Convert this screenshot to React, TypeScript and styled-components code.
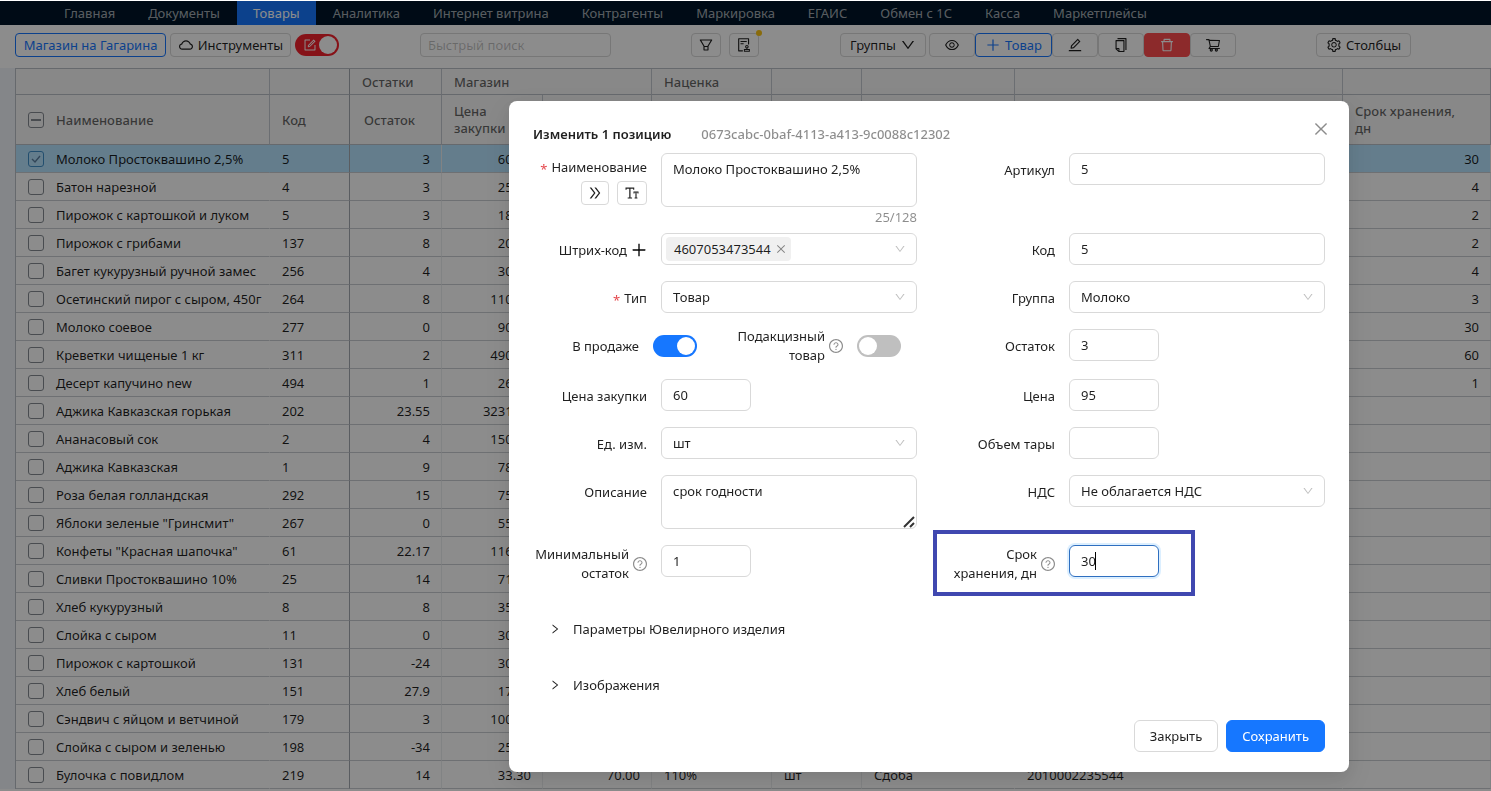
import React from 'react';
import styled, { createGlobalStyle, css } from 'styled-components';
import {
  AiOutlineAudit,
  AiOutlineClose,
  AiOutlineCloud,
  AiOutlineCopy,
  AiOutlineDelete,
  AiOutlineDoubleRight,
  AiOutlineDown,
  AiOutlineEdit,
  AiOutlineEye,
  AiOutlineFilter,
  AiOutlineFontSize,
  AiOutlineForm,
  AiOutlinePlus,
  AiOutlineQuestionCircle,
  AiOutlineRight,
  AiOutlineSetting,
  AiOutlineShoppingCart,
} from 'react-icons/ai';

const GlobalStyle = createGlobalStyle`
  * { box-sizing: border-box; }
  body {
    margin: 0;
    background: #fff;
    color: rgba(0, 0, 0, 0.88);
    font: 13px/22px "Noto Sans", "Open Sans", sans-serif;
  }
  button, input, textarea, select { font: inherit; color: inherit; margin: 0; }
  button { cursor: pointer; }
  svg { display: block; flex: none; }
`;

const Page = styled.div`
  height: 100vh;
  overflow: hidden;
  border-top: 1px solid #fff;
`;

/* ---------- top navigation ---------- */

const Nav = styled.nav`
  display: flex;
  gap: 1px;
  height: 24px;
  padding-left: 48px;
  background: #001529;
`;

const NavLink = styled.a<{ $active?: boolean }>`
  padding: 0 16px;
  line-height: 24px;
  white-space: nowrap;
  text-decoration: none;
  color: ${(p) => (p.$active ? '#fff' : 'rgba(255, 255, 255, 0.65)')};
  background: ${(p) => (p.$active ? '#1677ff' : 'transparent')};
`;

/* ---------- toolbar ---------- */

const Toolbar = styled.div`
  display: flex;
  align-items: center;
  height: 43px;
  padding: 0 15px 4px;
`;

const Group = styled.div<{ $gap?: number; $before?: number }>`
  display: flex;
  flex: none;
  align-items: center;
  gap: ${(p) => p.$gap ?? 0}px;
  margin-left: ${(p) => p.$before ?? 0}px;
`;

const ToolButton = styled.button<{ $tone?: 'primary' | 'danger'; $width?: number }>`
  display: flex;
  flex: none;
  align-items: center;
  justify-content: center;
  gap: 4px;
  height: 24px;
  width: ${(p) => (p.$width ? `${p.$width}px` : 'auto')};
  padding: 0 6px;
  border: 1px solid #d9d9d9;
  border-radius: 4px;
  background: #fff;
  line-height: 22px;
  white-space: nowrap;
  ${(p) =>
    p.$tone === 'primary' &&
    css`
      border-color: #1677ff;
      color: #1677ff;
    `}
  ${(p) =>
    p.$tone === 'danger' &&
    css`
      border-color: #ff4d4f;
      background: #ff4d4f;
      color: #fff;
    `}
`;

const Badged = styled.div`
  position: relative;
`;

const Dot = styled.span`
  position: absolute;
  top: -3px;
  right: -3px;
  width: 6px;
  height: 6px;
  border-radius: 50%;
  background: #fac414;
`;

const Search = styled.input`
  width: 191px;
  height: 24px;
  margin-left: 81px;
  padding: 0 7px;
  border: 1px solid #d9d9d9;
  border-radius: 4px;
  background: #fff;
  &::placeholder { color: rgba(0, 0, 0, 0.25); opacity: 1; }
`;

/* ---------- switch ---------- */

const SwitchBox = styled.label<{ $on: boolean; $color?: string }>`
  position: relative;
  display: flex;
  flex: none;
  align-items: center;
  width: 44px;
  height: 22px;
  padding: 0 8px;
  border-radius: 11px;
  color: #fff;
  background: ${(p) => (p.$on ? p.$color ?? '#1677ff' : '#bfbfbf')};
  &::after {
    content: '';
    position: absolute;
    top: 2px;
    left: ${(p) => (p.$on ? 24 : 2)}px;
    width: 18px;
    height: 18px;
    border-radius: 50%;
    background: #fff;
  }
  input {
    position: absolute;
    inset: 0;
    margin: 0;
    opacity: 0;
  }
`;

function Switch(props: { on: boolean; id: string; label: string; color?: string; children?: React.ReactNode }) {
  return (
    <SwitchBox $on={props.on} $color={props.color}>
      <input type="checkbox" role="switch" id={props.id} aria-label={props.label} defaultChecked={props.on} />
      {props.children}
    </SwitchBox>
  );
}

/* ---------- goods table ---------- */

const Sheet = styled.div`
  padding-left: 15px;
  background: #f0f5fa;
`;

const Table = styled.table`
  width: 100%;
  table-layout: fixed;
  border-collapse: separate;
  border-spacing: 0;
  border-left: 1px solid #babfc7;
  border-top: 1px solid #babfc7;
  background: #fff;
`;

const HeadCell = styled.th<{ $strong?: boolean; $indent?: number }>`
  padding: 1px 20px 0 ${(p) => p.$indent ?? 12}px;
  border-right: 1px solid ${(p) => (p.$strong ? '#a4a9b1' : '#c4c9d0')};
  border-bottom: 1px solid #babfc7;
  background: #f8f8f8;
  color: rgba(0, 0, 0, 0.6);
  font-weight: 500;
  line-height: 17px;
  text-align: left;
`;

const HeadRow = styled.tr<{ $height: number }>`
  height: ${(p) => p.$height}px;
`;

const Row = styled.tr<{ $selected?: boolean }>`
  height: 28px;
  background: ${(p) => (p.$selected ? '#b7e4ff' : '#fff')};
`;

const Cell = styled.td<{ $num?: boolean; $edge?: 'strong' | 'soft' }>`
  padding: 0 11px 0 12px;
  overflow: hidden;
  border-bottom: 1px solid #c9cdd1;
  border-right: 1px solid
    ${(p) => (p.$edge === 'strong' ? '#a4a9b1' : p.$edge === 'soft' ? '#eceef0' : 'transparent')};
  line-height: 26px;
  white-space: nowrap;
  text-align: ${(p) => (p.$num ? 'right' : 'left')};
`;

const NameLine = styled.label`
  display: flex;
  align-items: center;
  gap: 12px;
`;

const Check = styled.input`
  appearance: none;
  flex: none;
  width: 16px;
  height: 16px;
  border: 1px solid #858b92;
  border-radius: 3px;
  background: transparent;
  &:checked {
    border-color: #3f8fc9;
    background: no-repeat center / 12px 12px
      url("data:image/svg+xml,%3Csvg xmlns='http://www.w3.org/2000/svg' viewBox='0 0 12 12'%3E%3Cpath d='M2 6l3 3 5-6' fill='none' stroke='%235b7fa0' stroke-width='1.4'/%3E%3C/svg%3E");
  }
  &[data-mixed='true'] {
    background: linear-gradient(#858b92, #858b92) no-repeat center / 10px 2px;
  }
`;

type Item = [name: string, code: string, rest: string, buy: string, life: string];

const items: Item[] = [
  ['Молоко Простоквашино 2,5%', '5', '3', '60.00', '30'],
  ['Батон нарезной', '4', '3', '25.00', '4'],
  ['Пирожок с картошкой и луком', '5', '3', '18.00', '2'],
  ['Пирожок с грибами', '137', '8', '20.00', '2'],
  ['Багет кукурузный ручной замес', '256', '4', '30.00', '4'],
  ['Осетинский пирог с сыром, 450г', '264', '8', '110.00', '3'],
  ['Молоко соевое', '277', '0', '90.00', '30'],
  ['Креветки чищеные 1 кг', '311', '2', '490.00', '60'],
  ['Десерт капучино new', '494', '1', '26.00', '1'],
  ['Аджика Кавказская горькая', '202', '23.55', '3231.00', ''],
  ['Ананасовый сок', '2', '4', '150.00', ''],
  ['Аджика Кавказская', '1', '9', '78.00', ''],
  ['Роза белая голландская', '292', '15', '75.00', ''],
  ['Яблоки зеленые "Гринсмит"', '267', '0', '55.00', ''],
  ['Конфеты "Красная шапочка"', '61', '22.17', '116.00', ''],
  ['Сливки Простоквашино 10%', '25', '14', '71.00', ''],
  ['Хлеб кукурузный', '8', '8', '35.00', ''],
  ['Слойка с сыром', '11', '0', '30.00', ''],
  ['Пирожок с картошкой', '131', '-24', '30.00', ''],
  ['Хлеб белый', '151', '27.9', '17.00', ''],
  ['Сэндвич с яйцом и ветчиной', '179', '3', '100.00', ''],
  ['Слойка с сыром и зеленью', '198', '-34', '25.00', ''],
  ['Булочка с повидлом', '219', '14', '33.30', ''],
];

const columns = [254, 80, 92, 101, 109, 120, 90, 153, 0, 148];

function GoodsTable() {
  return (
    <Sheet>
      <Table>
        <colgroup>
          {columns.map((width, i) => (
            <col key={i} style={width ? { width } : undefined} />
          ))}
        </colgroup>
        <thead>
          <HeadRow $height={26}>
            <HeadCell />
            <HeadCell $strong />
            <HeadCell>Остатки</HeadCell>
            <HeadCell colSpan={2}>Магазин</HeadCell>
            <HeadCell>Наценка</HeadCell>
            <HeadCell />
            <HeadCell />
            <HeadCell />
            <HeadCell />
          </HeadRow>
          <HeadRow $height={50}>
            <HeadCell>
              <NameLine>
                <Check type="checkbox" data-mixed="true" />
                Наименование
              </NameLine>
            </HeadCell>
            <HeadCell $strong>Код</HeadCell>
            <HeadCell $indent={14}>Остаток</HeadCell>
            <HeadCell>Цена закупки</HeadCell>
            <HeadCell />
            <HeadCell />
            <HeadCell />
            <HeadCell />
            <HeadCell />
            <HeadCell>Срок хранения, дн</HeadCell>
          </HeadRow>
        </thead>
        <tbody>
          {items.map(([name, code, rest, buy, life], i) => {
            const last = i === items.length - 1;
            return (
              <Row key={name} $selected={i === 0}>
                <Cell>
                  <NameLine>
                    <Check type="checkbox" defaultChecked={i === 0} />
                    {name}
                  </NameLine>
                </Cell>
                <Cell $edge="strong">{code}</Cell>
                <Cell $num $edge="soft">{rest}</Cell>
                <Cell $num $edge="soft">{buy}</Cell>
                <Cell $num $edge="soft">{last ? '70.00' : ''}</Cell>
                <Cell $edge="soft">{last ? '110%' : ''}</Cell>
                <Cell $edge="soft">{last ? 'шт' : ''}</Cell>
                <Cell>{last ? 'Сдоба' : ''}</Cell>
                <Cell>{last ? '2010002235544' : ''}</Cell>
                <Cell $num $edge="soft">{life}</Cell>
              </Row>
            );
          })}
        </tbody>
      </Table>
    </Sheet>
  );
}

/* ---------- edit dialog ---------- */

const Mask = styled.div`
  position: fixed;
  inset: 1px 0 0 0;
  display: flex;
  align-items: flex-start;
  justify-content: flex-end;
  padding: 100px 142px 0 0;
  background: rgba(0, 0, 0, 0.45);
`;

const Dialog = styled.section`
  width: 840px;
  padding: 20px 24px;
  border-radius: 8px;
  background: #fff;
  box-shadow: 0 6px 16px rgba(0, 0, 0, 0.08), 0 9px 28px 8px rgba(0, 0, 0, 0.05);
`;

const DialogHead = styled.header`
  display: flex;
  align-items: center;
  height: 26px;
  margin-bottom: 6px;
`;

const Title = styled.h1`
  margin: 0 30px 0 0;
  font-size: 13px;
  font-weight: 600;
`;

const Ident = styled.span`
  flex: 1;
  color: rgba(0, 0, 0, 0.45);
  font-weight: 500;
`;

const CloseButton = styled.button`
  display: flex;
  align-items: center;
  align-self: flex-start;
  justify-content: center;
  width: 22px;
  height: 22px;
  margin: -3px -7px 0 0;
  padding: 0;
  border: 0;
  background: none;
  color: rgba(0, 0, 0, 0.45);
  font-size: 18px;
`;

const FormRow = styled.div<{ $after?: number }>`
  display: grid;
  grid-template-columns: 1fr 1fr;
  gap: 24px;
  align-items: start;
  margin-bottom: ${(p) => p.$after ?? 16}px;
`;

const Field = styled.div`
  position: relative;
  display: flex;
  align-items: flex-start;
`;

const LabelBox = styled.div<{ $width?: number }>`
  display: flex;
  flex: none;
  align-items: center;
  justify-content: flex-end;
  gap: 3px;
  width: ${(p) => p.$width ?? 115}px;
  min-height: 34px;
  margin-right: 13px;
  padding-right: 1px;
  line-height: 19px;
  text-align: right;
  svg { font-size: 16px; margin-right: -1px; color: rgba(0, 0, 0, 0.45); }
`;

const NameLabel = styled.div`
  width: 114px;
  margin-right: 14px;
  line-height: 28px;
  text-align: right;
  white-space: nowrap;
`;

const Star = styled.span`
  margin-right: 4px;
  color: #e5484d;
  line-height: 1;
  vertical-align: -2px;
`;

const SmallButtons = styled.div`
  display: flex;
  justify-content: flex-end;
  gap: 8px;
`;

const SmallButton = styled(ToolButton)`
  font-size: 16px;
  padding: 0;
`;

const AddButton = styled.button`
  display: flex;
  padding: 0;
  border: 0;
  background: none;
  svg { font-size: 18px; color: #000; }
`;

const Control = styled.div`
  position: relative;
  flex: 1;
  min-width: 0;
`;

const boxStyle = css`
  display: block;
  width: 100%;
  height: 32px;
  padding: 0 11px;
  border: 1px solid #d9d9d9;
  border-radius: 6px;
  outline: 0;
  background: #fff;
`;

const Input = styled.input<{ $short?: boolean; $focused?: boolean }>`
  ${boxStyle}
  width: ${(p) => (p.$short ? '90px' : '100%')};
  ${(p) =>
    p.$focused &&
    css`
      border-color: #2f6fc0;
      box-shadow: 0 0 0 2px rgba(5, 145, 255, 0.14);
    `}
`;

const Area = styled.textarea`
  ${boxStyle}
  height: 54px;
  padding: 4px 11px;
  resize: none;
`;

const Grip = styled.svg`
  position: absolute;
  right: 2px;
  bottom: 1px;
  width: 12px;
  height: 12px;
  stroke: #333;
  stroke-width: 2;
  pointer-events: none;
`;

const Select = styled.select`
  ${boxStyle}
  appearance: none;
`;

const Arrow = styled(AiOutlineDown)`
  position: absolute;
  top: 10px;
  right: 11px;
  font-size: 12px;
  color: rgba(0, 0, 0, 0.25);
  pointer-events: none;
`;

const Count = styled.div`
  height: 26px;
  line-height: 20px;
  text-align: right;
  color: rgba(0, 0, 0, 0.45);
`;

const TagSelect = styled.div`
  ${boxStyle}
  padding: 3px 4px;
`;

const Tag = styled.span`
  display: inline-flex;
  align-items: center;
  gap: 4px;
  height: 24px;
  padding: 0 4px 0 8px;
  border-radius: 4px;
  background: #f0f0f0;
`;

const TagClose = styled.button`
  display: flex;
  padding: 0;
  border: 0;
  background: none;
  font-size: 12px;
  color: rgba(0, 0, 0, 0.45);
`;

const Switches = styled.div`
  display: grid;
  grid-template: 34px / 1fr 1fr;
  align-items: center;
`;

const SwitchField = styled.div`
  display: flex;
  align-items: center;
`;

const Caret = styled.span`
  position: absolute;
  top: 7px;
  left: 26px;
  width: 1px;
  height: 18px;
  background: #000;
`;

const Marker = styled.div`
  position: absolute;
  inset: -15px 130px auto -8px;
  height: 66px;
  border: 4px solid #4048b0;
  pointer-events: none;
`;

const Section = styled.button`
  display: flex;
  align-items: center;
  gap: 12px;
  width: 100%;
  height: 56px;
  padding: 0 16px;
  border: 0;
  background: none;
  text-align: left;
  svg { font-size: 12px; }
`;

const Footer = styled.footer`
  display: flex;
  justify-content: flex-end;
  gap: 8px;
  margin-top: 7px;
`;

const FooterButton = styled.button<{ $primary?: boolean }>`
  height: 32px;
  padding: 0 15px;
  border: 1px solid ${(p) => (p.$primary ? '#1677ff' : '#d9d9d9')};
  border-radius: 6px;
  color: ${(p) => (p.$primary ? '#fff' : 'inherit')};
  background: ${(p) => (p.$primary ? '#1677ff' : '#fff')};
`;

function TextField(props: {
  id: string;
  label: string;
  value: string;
  short?: boolean;
  help?: boolean;
  focused?: boolean;
}) {
  return (
    <Field>
      <LabelBox>
        <label htmlFor={props.id}>{props.label}</label>
        {props.help && <AiOutlineQuestionCircle />}
      </LabelBox>
      <Control>
        <Input id={props.id} $short={props.short} $focused={props.focused} defaultValue={props.value} />
        {props.focused && <Caret />}
      </Control>
      {props.focused && <Marker />}
    </Field>
  );
}

function SelectField(props: { id: string; label: string; value: string; required?: boolean }) {
  return (
    <Field>
      <LabelBox>
        <label htmlFor={props.id}>
          {props.required && <Star>*</Star>}
          {props.label}
        </label>
      </LabelBox>
      <Control>
        <Select id={props.id}>
          <option>{props.value}</option>
        </Select>
        <Arrow />
      </Control>
    </Field>
  );
}

function EditDialog() {
  return (
    <Dialog role="dialog" aria-labelledby="dialog-title">
      <DialogHead>
        <Title id="dialog-title">Изменить 1 позицию</Title>
        <Ident>0673cabc-0baf-4113-a413-9c0088c12302</Ident>
        <CloseButton aria-label="Закрыть окно">
          <AiOutlineClose />
        </CloseButton>
      </DialogHead>

      <FormRow $after={0}>
        <Field>
          <NameLabel>
            <label htmlFor="name">
              <Star>*</Star>
              Наименование
            </label>
            <SmallButtons>
              <SmallButton $width={28} aria-label="Дополнить">
                <AiOutlineDoubleRight />
              </SmallButton>
              <SmallButton $width={30} aria-label="Регистр">
                <AiOutlineFontSize />
              </SmallButton>
            </SmallButtons>
          </NameLabel>
          <Control>
            <Area id="name" defaultValue="Молоко Простоквашино 2,5%" />
            <Count>25/128</Count>
          </Control>
        </Field>
        <TextField id="article" label="Артикул" value="5" />
      </FormRow>

      <FormRow $after={14}>
        <Field>
          <LabelBox>
            Штрих-код
            <AddButton aria-label="Добавить штрих-код">
              <AiOutlinePlus />
            </AddButton>
          </LabelBox>
          <Control>
            <TagSelect>
              <Tag>
                4607053473544
                <TagClose aria-label="Удалить">
                  <AiOutlineClose />
                </TagClose>
              </Tag>
            </TagSelect>
            <Arrow />
          </Control>
        </Field>
        <TextField id="code" label="Код" value="5" />
      </FormRow>

      <FormRow $after={14}>
        <SelectField id="type" label="Тип" value="Товар" required />
        <SelectField id="group" label="Группа" value="Молоко" />
      </FormRow>

      <FormRow>
        <Switches>
          <SwitchField>
            <LabelBox $width={107}>
              <label htmlFor="onsale">В продаже</label>
            </LabelBox>
            <Switch on id="onsale" label="В продаже" />
          </SwitchField>
          <SwitchField>
            <LabelBox $width={119}>
              <label htmlFor="excise">Подакцизный товар</label>
              <AiOutlineQuestionCircle />
            </LabelBox>
            <Switch on={false} id="excise" label="Подакцизный товар" />
          </SwitchField>
        </Switches>
        <TextField id="rest" label="Остаток" value="3" short />
      </FormRow>

      <FormRow $after={14}>
        <TextField id="buy" label="Цена закупки" value="60" short />
        <TextField id="price" label="Цена" value="95" short />
      </FormRow>

      <FormRow $after={14}>
        <SelectField id="unit" label="Ед. изм." value="шт" />
        <TextField id="volume" label="Объем тары" value="" short />
      </FormRow>

      <FormRow>
        <Field>
          <LabelBox>
            <label htmlFor="about">Описание</label>
          </LabelBox>
          <Control>
            <Area id="about" defaultValue="срок годности" />
            <Grip viewBox="0 0 12 12">
              <path d="M1 11L11 1M7 11L11 7" />
            </Grip>
          </Control>
        </Field>
        <SelectField id="vat" label="НДС" value="Не облагается НДС" />
      </FormRow>

      <FormRow $after={18}>
        <TextField id="min" label="Минимальный остаток" value="1" short help />
        <TextField id="life" label="Срок хранения, дн" value="30" short help focused />
      </FormRow>

      <Section>
        <AiOutlineRight />
        Параметры Ювелирного изделия
      </Section>
      <Section>
        <AiOutlineRight />
        Изображения
      </Section>

      <Footer>
        <FooterButton>Закрыть</FooterButton>
        <FooterButton $primary>Сохранить</FooterButton>
      </Footer>
    </Dialog>
  );
}

const links = [
  'Главная',
  'Документы',
  'Товары',
  'Аналитика',
  'Интернет витрина',
  'Контрагенты',
  'Маркировка',
  'ЕГАИС',
  'Обмен с 1С',
  'Касса',
  'Маркетплейсы',
];

export default function App() {
  return (
    <Page>
      <GlobalStyle />
      <Nav>
        {links.map((text) => (
          <NavLink key={text} href="#" $active={text === 'Товары'}>
            {text}
          </NavLink>
        ))}
      </Nav>
      <Toolbar>
        <Group $gap={4}>
          <ToolButton $tone="primary" $width={151}>Магазин на Гагарина</ToolButton>
          <ToolButton $width={121}>
            <AiOutlineCloud size={16} />
            Инструменты
          </ToolButton>
          <Switch on id="edit-mode" label="Режим правки" color="#f5222d">
            <AiOutlineForm size={14} />
          </Switch>
        </Group>
        <Search placeholder="Быстрый поиск" aria-label="Быстрый поиск" />
        <Group $gap={8} $before={80}>
          <ToolButton $width={30} aria-label="Фильтр">
            <AiOutlineFilter size={16} />
          </ToolButton>
          <Badged>
            <ToolButton $width={30} aria-label="Аудит">
              <AiOutlineAudit size={16} />
            </ToolButton>
            <Dot />
          </Badged>
        </Group>
        <Group $gap={3} $before={81}>
          <ToolButton $width={86}>
            Группы
            <AiOutlineDown size={16} />
          </ToolButton>
          <Group>
            <ToolButton $width={46} aria-label="Показать">
              <AiOutlineEye size={16} />
            </ToolButton>
            <ToolButton $width={77} $tone="primary">
              <AiOutlinePlus size={16} />
              Товар
            </ToolButton>
            <ToolButton $width={46} aria-label="Изменить">
              <AiOutlineEdit size={16} />
            </ToolButton>
            <ToolButton $width={46} aria-label="Копировать">
              <AiOutlineCopy size={16} />
            </ToolButton>
            <ToolButton $width={46} $tone="danger" aria-label="Удалить">
              <AiOutlineDelete size={16} />
            </ToolButton>
            <ToolButton $width={46} aria-label="В корзину">
              <AiOutlineShoppingCart size={16} />
            </ToolButton>
          </Group>
        </Group>
        <Group $before={80}>
          <ToolButton $width={95}>
            <AiOutlineSetting size={16} />
            Столбцы
          </ToolButton>
        </Group>
      </Toolbar>
      <GoodsTable />
      <Mask>
        <EditDialog />
      </Mask>
    </Page>
  );
}
